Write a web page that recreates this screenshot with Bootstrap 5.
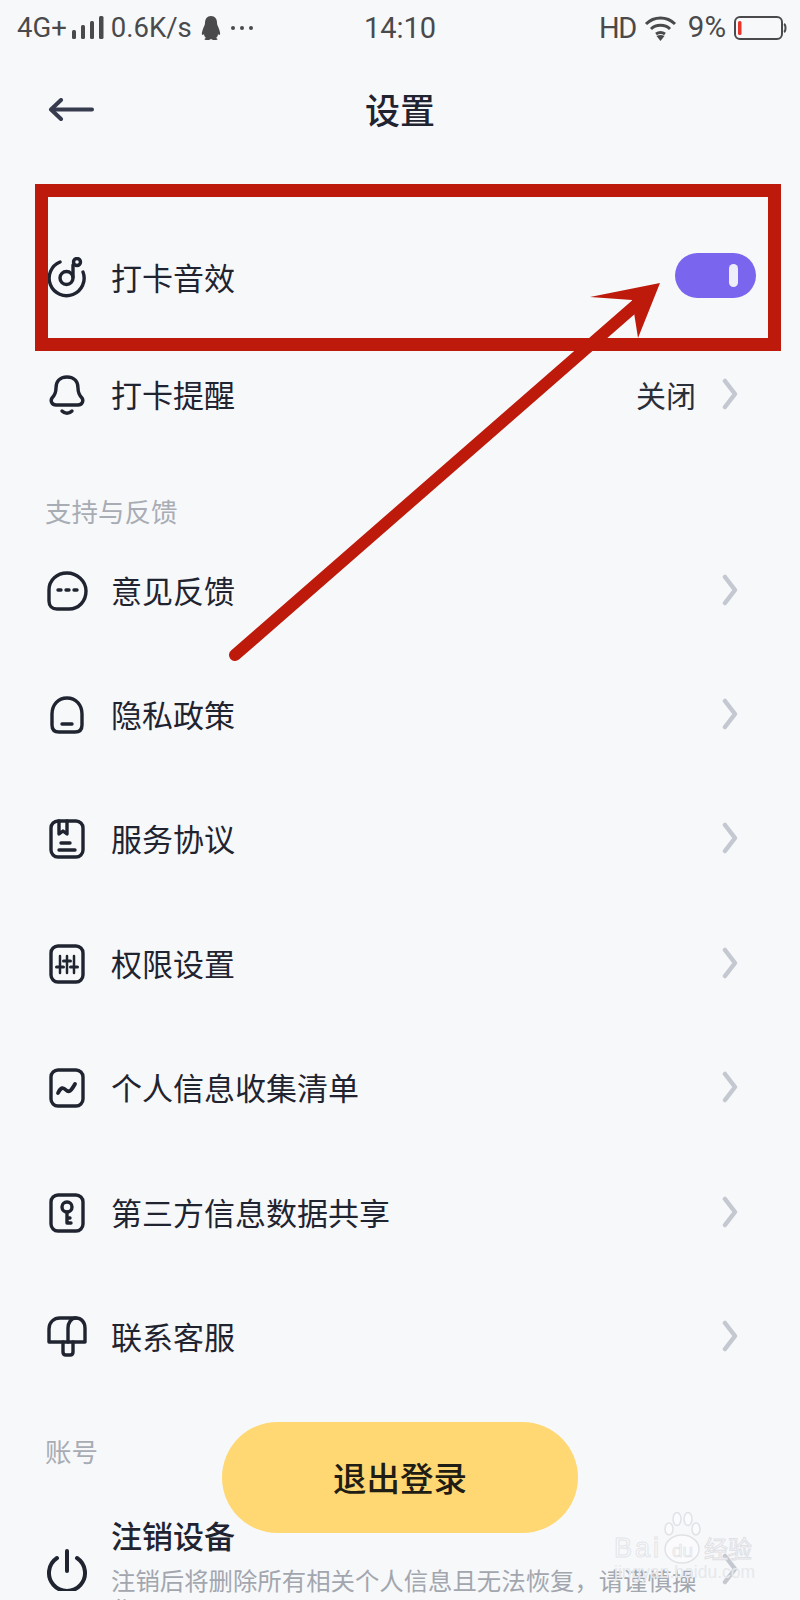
<!DOCTYPE html>
<html lang="zh">
<head>
<meta charset="utf-8">
<title>设置</title>
<link href="https://cdn.jsdelivr.net/npm/bootstrap@5.3.0/dist/css/bootstrap.min.css" rel="stylesheet">
<style>
html,body{height:1600px;overflow:hidden;margin:0}
body{background:#f7f8fa;color:#1f2430;font-family:"Noto Sans CJK SC","Noto Sans",sans-serif;position:relative;width:800px}
.sb{height:56px;color:#4a4a4c;font-family:Roboto,"Noto Sans",sans-serif;font-size:27.5px;line-height:1;position:relative;padding:0 13px 0 17px}
.sb-left,.sb-right{display:flex;align-items:center;height:56px}
.sb-time{position:absolute;left:0;right:0;top:0;height:56px;display:flex;align-items:center;justify-content:center;font-size:29px}
.sb-hd{letter-spacing:-1.5px;font-size:29px}
.sb-pct{font-size:29.5px;margin-left:11px}
.hdr{height:108px;position:relative;display:flex;align-items:center;justify-content:center;font-size:35px;font-weight:500;padding-bottom:2px}
.hdr svg{position:absolute;left:48px;top:42px}
.rw{height:124.4px;display:flex;align-items:center;padding-left:46px;padding-right:62px;font-size:31px;line-height:1}
.rw-first{height:118px;margin-top:55px}
.rw-second{height:116px}
.ic{width:42px;height:42px;flex:none;margin-right:23px}
.grow-t{flex:1 1 auto;min-width:0;margin-top:-3px}
.val{font-size:30px;margin-right:26px;margin-top:-3px;color:#2a2f3a}
.chev{width:16px;height:32px;flex:none;margin-top:-2px}
.lbl{color:#a8acb4;font-size:26.5px;line-height:1;padding-left:45px}
.lbl-a{margin-top:45px;margin-bottom:4px}
.lbl-b{margin-top:39px;margin-bottom:0}
.rw-last{height:auto;align-items:flex-start;margin-top:54px}
.ttl-l{font-size:31px;font-weight:500;line-height:1}
.sub-l{font-size:24.4px;line-height:29px;color:#a2a6ae;margin-top:15px;width:592px}
.ic-pow{margin-top:30px}
.chev-l{margin-top:34px;margin-left:auto}
.tgl{width:81px;height:45px;border-radius:23px;background:#7a65ee;position:relative;margin-right:-18px;margin-bottom:5px;flex:none}
.tgl::after{content:"";position:absolute;left:54px;top:11px;width:9px;height:23px;border-radius:5px;background:#eeeefa}
.logout{position:absolute;left:222px;top:1422px;width:356px;height:111px;border-radius:56px;background:#ffd873;border:0;color:#1f1d14;font-size:33.5px;font-weight:500;padding:0}
.mark-box{position:absolute;left:34.5px;top:183.5px;width:746px;height:167px;border:13px solid #bd1a0b;pointer-events:none}
.arrow{position:absolute;left:0;top:0;pointer-events:none}
.wm{position:absolute;left:612px;top:1510px;width:150px;height:76px;pointer-events:none;font-family:"Liberation Sans",sans-serif}
.wm-a{position:absolute;left:2px;top:25px;font-size:27px;line-height:1;font-weight:400;letter-spacing:3px;-webkit-text-stroke:1px #e3e5e9;color:#fbfbfd}
.wm-d{position:absolute;left:60px;top:31px;font-size:19px;line-height:1;-webkit-text-stroke:.6px #dfe1e5;color:#f5f6f8}
.wm-b{position:absolute;left:92px;top:26px;font-size:24px;line-height:1;font-family:"Noto Sans CJK SC",sans-serif;-webkit-text-stroke:1px #dfe1e5;color:#fbfbfd}
.wm-c{position:absolute;left:2px;top:54px;font-size:17.500px;line-height:1;color:#e6e8ec;white-space:nowrap}
</style>
</head>
<body>
<div class="sb d-flex justify-content-between">
  <div class="sb-left">
    <span>4G+</span>
    <svg class="ms-1" width="36" height="24" viewBox="0 0 36 24" fill="#4a4a4c"><rect x="1" y="14" width="4" height="9" rx="1.5"/><rect x="10" y="9" width="4" height="14" rx="1.5"/><rect x="19" y="5" width="4" height="18" rx="1.5"/><rect x="28" y="0" width="4.5" height="23" rx="1.5"/></svg>
    <span class="ms-1">0.6K/s</span>
    <svg class="ms-2" width="22" height="24" viewBox="0 0 22 24" fill="#4a4a4c"><path d="M11 0c4 0 6 3 6 7 0 2 1 3 2 6 1 3 2 6 0 6l-1-1c0 2-1 3-2 4 2 .5 2 2 0 2h-3l-2-1-2 1H6c-2 0-2-1.500 0-2-1-1-2-2-2-4l-1 1c-2 0-1-3 0-6 1-3 2-4 2-6 0-4 2-7 6-7z"/></svg>
    <svg class="ms-2" width="24" height="6" viewBox="0 0 24 6" fill="#4a4a4c"><circle cx="3" cy="3" r="2"/><circle cx="12" cy="3" r="2"/><circle cx="21" cy="3" r="2"/></svg>
  </div>
  <div class="sb-time">14:10</div>
  <div class="sb-right">
    <span class="sb-hd">HD</span>
    <svg class="ms-2" width="33" height="25" viewBox="0 0 33 25" fill="none" stroke="#4a4a4c" stroke-width="3"><path d="M2 8c8-8 21-8 29 0"/><path d="M7 13c5-5 14-5 19 0"/><path d="M12 18c3-2 6-2 9 0"/><path d="M16.500 25l-4-5c2.500-1.500 5.500-1.500 8 0z" fill="#4a4a4c" stroke="none"/></svg>
    <span class="sb-pct">9%</span>
    <svg class="ms-2" width="53" height="24" viewBox="0 0 53 24" fill="none"><rect x="1" y="1" width="47" height="22" rx="5" stroke="#4a4a4c" stroke-width="2"/><rect x="4" y="5" width="3.500" height="14" rx="1.500" fill="#e8352b"/><path d="M50 8c2 1 2 7 0 8" stroke="#4a4a4c" stroke-width="2"/></svg>
  </div>
</div>

<div class="hdr">设置
  <svg width="46" height="24" viewBox="0 0 46 24" fill="none" stroke="#363b4d" stroke-width="4" stroke-linecap="round" stroke-linejoin="round"><path d="M44 11.500H4"/><path d="M13 2L3 11.500 13 21"/></svg>
</div>

<div class="rw rw-first">
  <svg class="ic" viewBox="0 0 42 42" fill="none" stroke="#1f2430" stroke-width="3.400" stroke-linecap="round"><path d="M14 5A17.500 17.500 0 1 0 37 15"/><circle cx="20.500" cy="21" r="6.500"/><path d="M27 20V8"/><circle cx="31" cy="5" r="3.500"/></svg>
  <div class="grow-t">打卡音效</div>
  <div class="tgl"></div>
</div>
<div class="rw rw-second">
  <svg class="ic" viewBox="0 0 42 42" fill="none" stroke="#1f2430" stroke-width="3.400" stroke-linecap="round" stroke-linejoin="round"><path d="M21 3c-7.500 0-11 5-11 11 0 5-1 7-4 10-2 3 0 7 4 7h22c4 0 6-4 4-7-3-3-4-5-4-10 0-6-3.500-11-11-11z"/><path d="M16 37c3 3 7 3 10 0"/></svg>
  <div class="grow-t">打卡提醒</div>
  <span class="val">关闭</span>
  <svg class="chev" viewBox="0 0 16 32" fill="none" stroke="#c4c8d0" stroke-width="4.500" stroke-linecap="round" stroke-linejoin="round"><path d="M3 3l10 13L3 29"/></svg>
</div>

<div class="lbl lbl-a">支持与反馈</div>

<div class="rw">
  <svg class="ic" viewBox="0 0 42 42" fill="none" stroke="#1f2430" stroke-width="3.400" stroke-linecap="round"><path d="M21 3C11 3 3 10 3 20v11c0 5 3 8 8 8h12c10 0 17-8 17-18S31 3 21 3z"/><path d="M12 20h3M20 20h3M28 20h3"/></svg>
  <div class="grow-t">意见反馈</div>
  <svg class="chev" viewBox="0 0 16 32" fill="none" stroke="#c4c8d0" stroke-width="4.500" stroke-linecap="round" stroke-linejoin="round"><path d="M3 3l10 13L3 29"/></svg>
</div>
<div class="rw">
  <svg class="ic" viewBox="0 0 42 42" fill="none" stroke="#1f2430" stroke-width="3.400" stroke-linecap="round"><path d="M21 4C12 4 6 11 6 20v11c0 5 3 7 7 7h16c4 0 7-2 7-7V20c0-9-6-16-15-16z"/><path d="M16 30h10"/></svg>
  <div class="grow-t">隐私政策</div>
  <svg class="chev" viewBox="0 0 16 32" fill="none" stroke="#c4c8d0" stroke-width="4.500" stroke-linecap="round" stroke-linejoin="round"><path d="M3 3l10 13L3 29"/></svg>
</div>
<div class="rw">
  <svg class="ic" viewBox="0 0 42 42" fill="none" stroke="#1f2430" stroke-width="3.400" stroke-linecap="round" stroke-linejoin="round"><rect x="5" y="3" width="32" height="36" rx="7"/><path d="M13 3v13l4-3 4 3V3"/><path d="M15 25h9M13 32h16"/></svg>
  <div class="grow-t">服务协议</div>
  <svg class="chev" viewBox="0 0 16 32" fill="none" stroke="#c4c8d0" stroke-width="4.500" stroke-linecap="round" stroke-linejoin="round"><path d="M3 3l10 13L3 29"/></svg>
</div>
<div class="rw">
  <svg class="ic" viewBox="0 0 42 42" fill="none" stroke="#1f2430" stroke-width="3.400" stroke-linecap="round"><rect x="5" y="3" width="32" height="36" rx="7"/><path d="M14 13v17M21 13v17M28 13v17" stroke-width="2.500"/><path d="M10.500 24h7M17.500 18h7M24.500 24h7" stroke-width="3"/></svg>
  <div class="grow-t">权限设置</div>
  <svg class="chev" viewBox="0 0 16 32" fill="none" stroke="#c4c8d0" stroke-width="4.500" stroke-linecap="round" stroke-linejoin="round"><path d="M3 3l10 13L3 29"/></svg>
</div>
<div class="rw">
  <svg class="ic" viewBox="0 0 42 42" fill="none" stroke="#1f2430" stroke-width="3.400" stroke-linecap="round" stroke-linejoin="round"><rect x="5" y="3" width="32" height="36" rx="7"/><path d="M12 26c3-6 5-6 8-3s5 1 9-6" stroke-width="3.800"/></svg>
  <div class="grow-t">个人信息收集清单</div>
  <svg class="chev" viewBox="0 0 16 32" fill="none" stroke="#c4c8d0" stroke-width="4.500" stroke-linecap="round" stroke-linejoin="round"><path d="M3 3l10 13L3 29"/></svg>
</div>
<div class="rw">
  <svg class="ic" viewBox="0 0 42 42" fill="none" stroke="#1f2430" stroke-width="3.400" stroke-linecap="round" stroke-linejoin="round"><rect x="5" y="3" width="32" height="36" rx="7"/><circle cx="21" cy="15" r="5"/><path d="M21 20v11h4M21 26h3"/></svg>
  <div class="grow-t">第三方信息数据共享</div>
  <svg class="chev" viewBox="0 0 16 32" fill="none" stroke="#c4c8d0" stroke-width="4.500" stroke-linecap="round" stroke-linejoin="round"><path d="M3 3l10 13L3 29"/></svg>
</div>
<div class="rw">
  <svg class="ic" viewBox="0 0 42 42" fill="none" stroke="#1f2430" stroke-width="3.400" stroke-linecap="round" stroke-linejoin="round"><path d="M3 26V13C3 6 8 2 14 2H30C35 2 39 6 39 12V26Z"/><path d="M30 2C25 2 22 7 22 12V26"/><path d="M17 26V36c0 2 1 3 3 3h4c2 0 3-1 3-3V26"/></svg>
  <div class="grow-t">联系客服</div>
  <svg class="chev" viewBox="0 0 16 32" fill="none" stroke="#c4c8d0" stroke-width="4.500" stroke-linecap="round" stroke-linejoin="round"><path d="M3 3l10 13L3 29"/></svg>
</div>

<div class="lbl lbl-b">账号</div>

<div class="rw rw-last">
  <svg class="ic ic-pow" viewBox="0 0 42 42" fill="none" stroke="#1f2430" stroke-width="4" stroke-linecap="round"><path d="M21 2v20"/><path d="M11 9a18 18 0 1 0 20 0"/></svg>
  <div class="flex-shrink-0">
    <div class="ttl-l">注销设备</div>
    <div class="sub-l">注销后将删除所有相关个人信息且无法恢复，请谨慎操作</div>
  </div>
  <svg class="chev chev-l" viewBox="0 0 16 32" fill="none" stroke="#c4c8d0" stroke-width="4.500" stroke-linecap="round" stroke-linejoin="round"><path d="M3 3l10 13L3 29"/></svg>
</div>

<button type="button" class="btn logout">退出登录</button>

<div class="mark-box"></div>
<svg class="arrow" width="800" height="700" viewBox="0 0 800 700"><path d="M235 655L636 305" stroke="#bd1a0b" stroke-width="12" stroke-linecap="round" fill="none"/><path d="M660 283L590 297 632 300 638 338z" fill="#bd1a0b"/></svg>

<div class="wm">
  <svg class="position-absolute" style="left:50px;top:0" width="40" height="56" viewBox="0 0 40 56" fill="none" stroke="#e0e2e6" stroke-width="1.500"><ellipse cx="7" cy="19" rx="4" ry="6" fill="#fbfbfd"/><ellipse cx="15" cy="9" rx="4" ry="6.500" fill="#fbfbfd"/><ellipse cx="26" cy="9" rx="4" ry="6.500" fill="#fbfbfd"/><ellipse cx="34" cy="19" rx="4" ry="6" fill="#fbfbfd"/><ellipse cx="20" cy="39" rx="17" ry="14" fill="#fbfbfd"/></svg>
  <span class="wm-a">Bai</span>
  <span class="wm-d">du</span>
  <span class="wm-b">经验</span>
  <span class="wm-c">jingyan.baidu.com</span>
</div>
</body>
</html>
